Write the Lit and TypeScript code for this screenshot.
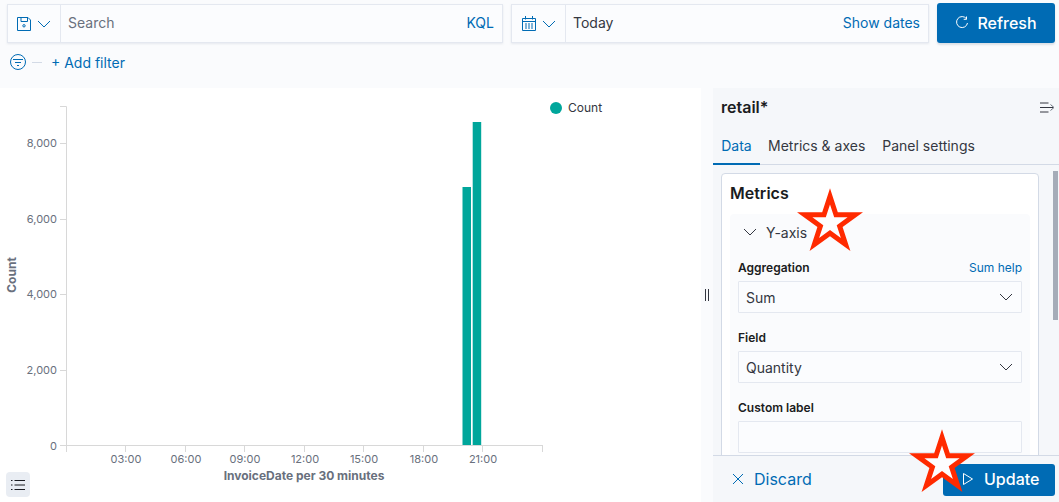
import { html, css, LitElement, svg } from "lit";
import { customElement } from "lit/decorators.js";

const chevron = (color = "#006bb4") => html`<svg class="chev" width="16" height="16" viewBox="0 0 16 16" fill="none" stroke=${color}><path d="M2 5l6 6 6-6"/></svg>`;

const yTicks = [
    { label: "8,000", y: 143 },
    { label: "6,000", y: 219 },
    { label: "4,000", y: 294 },
    { label: "2,000", y: 370 },
    { label: "0", y: 445.5 },
];
const xTicks = [
    { label: "03:00", x: 125 },
    { label: "06:00", x: 185 },
    { label: "09:00", x: 244 },
    { label: "12:00", x: 304 },
    { label: "15:00", x: 363 },
    { label: "18:00", x: 423 },
    { label: "21:00", x: 482 },
];

// points of a regular five point star around 40,40
const starPoints = (outer: number) => {
    const pts: string[] = [];
    for (let i = 0; i < 10; i++) {
        const r = i % 2 ? outer * 0.382 : outer;
        const a = (-90 + i * 36) * (Math.PI / 180);
        pts.push(`${(40 + r * Math.cos(a)).toFixed(1)},${(40 + r * Math.sin(a)).toFixed(1)}`);
    }
    return pts.join(" ");
};

@customElement("app-root")
export class AppRoot extends LitElement {
    static styles = css`
        :host {
            display: block;
            width: 1059px;
            height: 502px;
            position: relative;
            overflow: hidden;
            background: #fafbfd;
            font-family: Inter, "Liberation Sans", sans-serif;
            font-size: 14px;
            color: #343741;
        }
        svg { flex-shrink: 0; display: block; }

        /* top query bar */
        .top {
            height: 88px;
            box-sizing: border-box;
            padding: 3px 4px 0 7px;
        }
        .query {
            display: flex;
            align-items: flex-start;
            height: 40px;
        }
        .field {
            display: flex;
            align-items: stretch;
            height: 39px;
            margin-top: 1px;
            box-sizing: border-box;
            border: 1px solid #e4e8f0;
            box-shadow: 0 1px 2px rgba(152, 162, 179, 0.2);
            background: #fbfcfe;
        }
        .field.search { width: 496px; margin-right: 8px; }
        .field.date { width: 418px; margin-right: 8px; }
        .prepend {
            display: flex;
            align-items: center;
            gap: 5px;
            border-right: 1px solid #e4e8f0;
            box-sizing: border-box;
        }
        .search .prepend { width: 53px; padding-left: 9px; }
        .date .prepend { width: 54px; padding-left: 10px; }
        .value {
            flex: 1;
            display: flex;
            align-items: center;
            justify-content: space-between;
            padding: 0 8px 2px 7px;
        }
        .placeholder { color: #69707d; }
        .link { color: #006bb4; }
        .refresh {
            display: flex;
            align-items: center;
            justify-content: center;
            gap: 8px;
            width: 118px;
            height: 40px;
            background: #006bb4;
            color: #fff;
            border-radius: 3px;
            font-size: 16px;
            font-weight: 500;
            box-shadow: 0 2px 2px rgba(152, 162, 179, 0.3);
        }
        .filters {
            display: flex;
            align-items: center;
            margin-top: 9px;
            padding-left: 3px;
            height: 20px;
            color: #006bb4;
        }
        .filters .dash {
            width: 10px;
            height: 1px;
            background: #d3dae6;
            margin: 0 9px 0 6px;
        }

        /* main split */
        .main {
            display: flex;
            height: 414px;
        }
        .chart {
            width: 701px;
            background: #fff;
            position: relative;
        }
        .chart svg.plot {
            position: absolute;
            left: 0;
            top: -88px;
        }
        .plot text { font-family: Inter, "Liberation Sans", sans-serif; }
        .legend-toggle {
            position: absolute;
            left: 6px;
            top: 384px;
            width: 24px;
            height: 25px;
            border-radius: 4px;
            background: #e9edf3;
            display: flex;
            align-items: center;
            justify-content: center;
        }
        .resizer {
            width: 12px;
            display: flex;
            align-items: center;
            justify-content: center;
            gap: 2px;
            padding-bottom: 1px;
        }
        .resizer i {
            width: 1px;
            height: 12px;
            background: #343741;
        }

        /* side panel */
        .panel {
            flex: 1;
            display: flex;
            flex-direction: column;
            background: #f5f7fa;
            position: relative;
            min-width: 0;
        }
        .panel-head {
            display: flex;
            align-items: center;
            justify-content: space-between;
            height: 38px;
            padding: 0 4px 0 8px;
        }
        .panel-head h2 {
            margin: 0;
            font-size: 16px;
            line-height: 38px;
            font-weight: 600;
            color: #1a1c21;
        }
        .tabs {
            display: flex;
            height: 39px;
            box-sizing: border-box;
            border-bottom: 1px solid #d3dae6;
        }
        .tab {
            padding: 2px 8px 0;
            margin-bottom: -1px;
            display: flex;
            align-items: center;
            justify-content: center;
            box-sizing: border-box;
            border-bottom: 2px solid transparent;
        }
        .tab.on { color: #006bb4; border-bottom-color: #006bb4; width: 47px; padding: 2px 0 0; }
        .tab.last { margin-left: 1px; }
        .scroll {
            flex: 1;
            overflow: hidden;
            padding: 8px 20px 0 8px;
            position: relative;
        }
        .thumb {
            position: absolute;
            right: 1px;
            top: 6px;
            width: 5px;
            height: 149px;
            background: #a5acb8;
        }
        .card {
            background: #fff;
            border: 1px solid #d3dae6;
            border-radius: 4px 4px 0 0;
            padding: 8px 8px 0;
            height: 300px;
        }
        .card h3 {
            margin: 0 0 10px;
            font-size: 16px;
            line-height: 22px;
            font-weight: 600;
            color: #1a1c21;
        }
        .agg {
            background: #fafbfd;
            border-radius: 4px 4px 0 0;
            padding: 0 8px;
            height: 250px;
        }
        .agg-title {
            display: flex;
            align-items: center;
            height: 36px;
            gap: 8px;
            padding-left: 4px;
        }
        .row-label {
            display: flex;
            justify-content: space-between;
            align-items: center;
            height: 20px;
            font-size: 12px;
            font-weight: 600;
            color: #1a1c21;
            margin-bottom: 4px;
        }
        .row-label .link { font-weight: 400; }
        .agg-first { margin-top: 7px; }
        .select {
            display: flex;
            align-items: center;
            justify-content: space-between;
            height: 32px;
            box-sizing: border-box;
            border: 1px solid #e4e8f0;
            border-radius: 1px;
            padding: 0 7px 0 7px;
            background: #fbfcfe;
            margin-bottom: 14px;
        }
        .footer {
            height: 47px;
            box-sizing: border-box;
            border-top: 1px solid #d3dae6;
            background: #f5f7fa;
            display: flex;
            align-items: center;
            justify-content: space-between;
            padding: 0 4px 0 19px;
        }
        .discard {
            display: flex;
            align-items: center;
            gap: 10px;
            color: #006bb4;
            font-size: 16px;
        }
        .update {
            display: flex;
            align-items: center;
            gap: 10px;
            box-sizing: border-box;
            padding: 0 0 2px 19px;
            width: 112px;
            height: 32px;
            margin-top: 1px;
            border-radius: 3px;
            background: #006bb4;
            color: #fff;
            font-size: 16px;
            font-weight: 500;
        }
        .star {
            position: absolute;
            pointer-events: none;
        }
    `;

    renderPlot() {
        return html`<svg class="plot" width="701" height="502" viewBox="0 0 701 502">
            <g stroke="#d8d8d8" fill="none">
                <path d="M60 106.5H66.500V446M60 143.500H66M60 219.500H66M60 294.500H66M60 370.500H66M60 445.500H543"/>
                <path d="M66.500 446V452M542.500 446V452"/>
                ${xTicks.map((t) => svg`<path d="M${t.x + 0.5} 446V452"/>`)}
            </g>
            <rect x="462.500" y="187" width="8.500" height="258" fill="#00a69b"/>
            <rect x="472.700" y="122" width="8.500" height="323" fill="#00a69b"/>
            ${yTicks.map((t) => svg`<text x="57" y=${t.y + 4} text-anchor="end" font-size="11" fill="#69707d">${t.label}</text>`)}
            ${xTicks.map((t) => svg`<text x=${t.x + 1} y="463" text-anchor="middle" font-size="11" fill="#69707d">${t.label}</text>`)}
            <text x="304" y="480" text-anchor="middle" font-size="12" font-weight="700" fill="#69707d">InvoiceDate per 30 minutes</text>
            <text transform="translate(16 275) rotate(-90)" text-anchor="middle" font-size="12" font-weight="700" fill="#69707d">Count</text>
            <circle cx="556" cy="108" r="6" fill="#00a69b"/>
            <text x="568" y="112" font-size="12" fill="#343741">Count</text>
        </svg>`;
    }

    renderStar(x: number, y: number) {
        return html`<svg class="star" style="left:${x - 40}px;top:${y - 40}px" width="80" height="80" viewBox="0 0 80 80">
            <polygon points=${starPoints(34.7)} fill="#ff2a00"/>
            <polygon points=${starPoints(18.5)} fill="#fdfdfe"/>
        </svg>`;
    }

    render() {
        return html`
            <div class="top">
                <div class="query">
                    <div class="field search">
                        <div class="prepend">
                            <svg width="14" height="14" viewBox="0 0 14 14" fill="none" stroke="#006bb4"><path d="M.5.500h10.500l2.500 2.500v10.500H.5zM4 .5v4h6.500v-4"/><circle cx="7" cy="8.800" r="1.200"/></svg>
                            ${chevron()}
                        </div>
                        <div class="value"><span class="placeholder">Search</span><span class="link">KQL</span></div>
                    </div>
                    <div class="field date">
                        <div class="prepend">
                            <svg width="14" height="15" viewBox="0 0 14 15" fill="none" stroke="#006bb4"><path d="M.5 2.500h13v12H.5zM.5 5.500h13M3.500 0v3.500M10.500 0v3.500"/><path d="M3 8h2M6 8h2M9 8h2M3 10h2M6 10h2M9 10h2M3 12h2M6 12h2M9 12h2"/></svg>
                            ${chevron()}
                        </div>
                        <div class="value"><span>Today</span><span class="link">Show dates</span></div>
                    </div>
                    <div class="refresh">
                        <svg width="14" height="14" viewBox="0 0 14 14" fill="none" stroke="#fff"><path d="M11.500 2.800A5.500 5.500 0 1 0 12.500 7M11.500.5v2.800H8.700"/></svg>
                        <span>Refresh</span>
                    </div>
                </div>
                <div class="filters">
                    <svg width="16" height="16" viewBox="0 0 16 16" fill="none" stroke="#006bb4"><circle cx="8" cy="8" r="7.500"/><path d="M3 5.500h10M5 8.500h6M7 11.500h2"/></svg>
                    <span class="dash"></span>
                    <span>+ Add filter</span>
                </div>
            </div>
            <div class="main">
                <div class="chart">
                    ${this.renderPlot()}
                    <div class="legend-toggle">
                        <svg width="14" height="12" viewBox="0 0 14 12" fill="none" stroke="#1a1c21"><path d="M3.500 1.500H14M3.500 6H14M3.500 10.500H14"/><path d="M0 1.500h1.500M0 6h1.500M0 10.500h1.500"/></svg>
                    </div>
                </div>
                <div class="resizer"><i></i><i></i></div>
                <div class="panel">
                    <div class="panel-head">
                        <h2>retail*</h2>
                        <svg width="15" height="11" viewBox="0 0 15 11" fill="none"><path d="M0 1h8.500M0 5.500h13M0 10h8.500" stroke="#343741"/><path d="M10.500 2.500l3.500 3-3.500 3" stroke="#69707d"/></svg>
                    </div>
                    <div class="tabs">
                        <div class="tab on">Data</div>
                        <div class="tab">Metrics &amp; axes</div>
                        <div class="tab last">Panel settings</div>
                    </div>
                    <div class="scroll">
                        <div class="thumb"></div>
                        <div class="card">
                            <h3>Metrics</h3>
                            <div class="agg">
                                <div class="agg-title">${chevron("#343741")}<span>Y-axis</span></div>
                                <div class="row-label agg-first"><span>Aggregation</span><span class="link">Sum help</span></div>
                                <div class="select"><span>Sum</span>${chevron("#343741")}</div>
                                <div class="row-label"><span>Field</span></div>
                                <div class="select"><span>Quantity</span>${chevron("#343741")}</div>
                                <div class="row-label"><span>Custom label</span></div>
                                <div class="select"></div>
                            </div>
                        </div>
                    </div>
                    <div class="footer">
                        <div class="discard">
                            <svg width="12" height="12" viewBox="0 0 12 12" fill="none" stroke="#006bb4"><path d="M1 1l10 10M11 1L1 11"/></svg>
                            <span>Discard</span>
                        </div>
                        <div class="update">
                            <svg width="12" height="14" viewBox="0 0 12 14" fill="none" stroke="#fff"><path d="M1.500 1.500 10.500 7l-9 5.500z"/></svg>
                            <span>Update</span>
                        </div>
                    </div>
                </div>
            </div>
            ${this.renderStar(830, 222.7)}
            ${this.renderStar(942, 463.7)}
        `;
    }
}
